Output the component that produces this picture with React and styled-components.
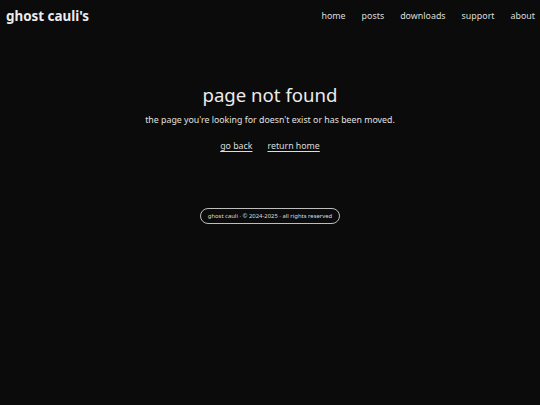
import React from "react";
import styled, { createGlobalStyle } from "styled-components";

const GlobalStyle = createGlobalStyle`
  html, body {
    margin: 0;
    padding: 0;
    background: #0b0b0b;
    color: #e8e8e8;
    font-family: "Noto Sans", "Open Sans", sans-serif;
  }
`;

const Page = styled.div`
  min-height: 405px;
  display: flex;
  flex-direction: column;
`;

const Header = styled.header`
  display: flex;
  align-items: center;
  justify-content: space-between;
  height: 31px;
  padding: 0 5px 0 6px;
`;

const Logo = styled.a`
  font-size: 13.4px;
  font-weight: 700;
  color: #ececec;
  text-decoration: none;
`;

const Nav = styled.nav`
  display: flex;
  gap: 16px;
  padding-left: 2px;
`;

const NavLink = styled.a`
  font-size: 8.9px;
  color: #dcdcdc;
  text-decoration: none;
`;

const Main = styled.main`
  display: flex;
  flex-direction: column;
  align-items: center;
  padding-top: 51px;
`;

const Title = styled.h1`
  margin: 0;
  font-size: 18.6px;
  font-weight: 400;
  color: #ececec;
  line-height: 26px;
`;

const Subtitle = styled.p`
  margin: 6px 0 0;
  font-size: 8.8px;
  color: #e0e0e0;
`;

const Actions = styled.div`
  display: flex;
  gap: 15px;
  margin-top: 14px;
`;

const ActionLink = styled.a`
  font-size: 8.8px;
  color: #dcdcdc;
  text-decoration: underline;
  text-underline-offset: 2px;
`;

const Footer = styled.footer`
  margin-top: 56px;
  border: 1px solid #bdbdbd;
  border-radius: 999px;
  padding: 3px 7px;
  font-size: 5.9px;
  color: #dcdcdc;
`;

export default function App() {
  return (
    <Page>
      <GlobalStyle />
      <Header>
        <Logo href="#">ghost cauli's</Logo>
        <Nav>
          <NavLink href="#">home</NavLink>
          <NavLink href="#">posts</NavLink>
          <NavLink href="#">downloads</NavLink>
          <NavLink href="#">support</NavLink>
          <NavLink href="#">about</NavLink>
        </Nav>
      </Header>
      <Main>
        <Title>page not found</Title>
        <Subtitle>the page you're looking for doesn't exist or has been moved.</Subtitle>
        <Actions>
          <ActionLink href="#">go back</ActionLink>
          <ActionLink href="#">return home</ActionLink>
        </Actions>
        <Footer>ghost cauli · © 2024-2025 · all rights reserved</Footer>
      </Main>
    </Page>
  );
}
